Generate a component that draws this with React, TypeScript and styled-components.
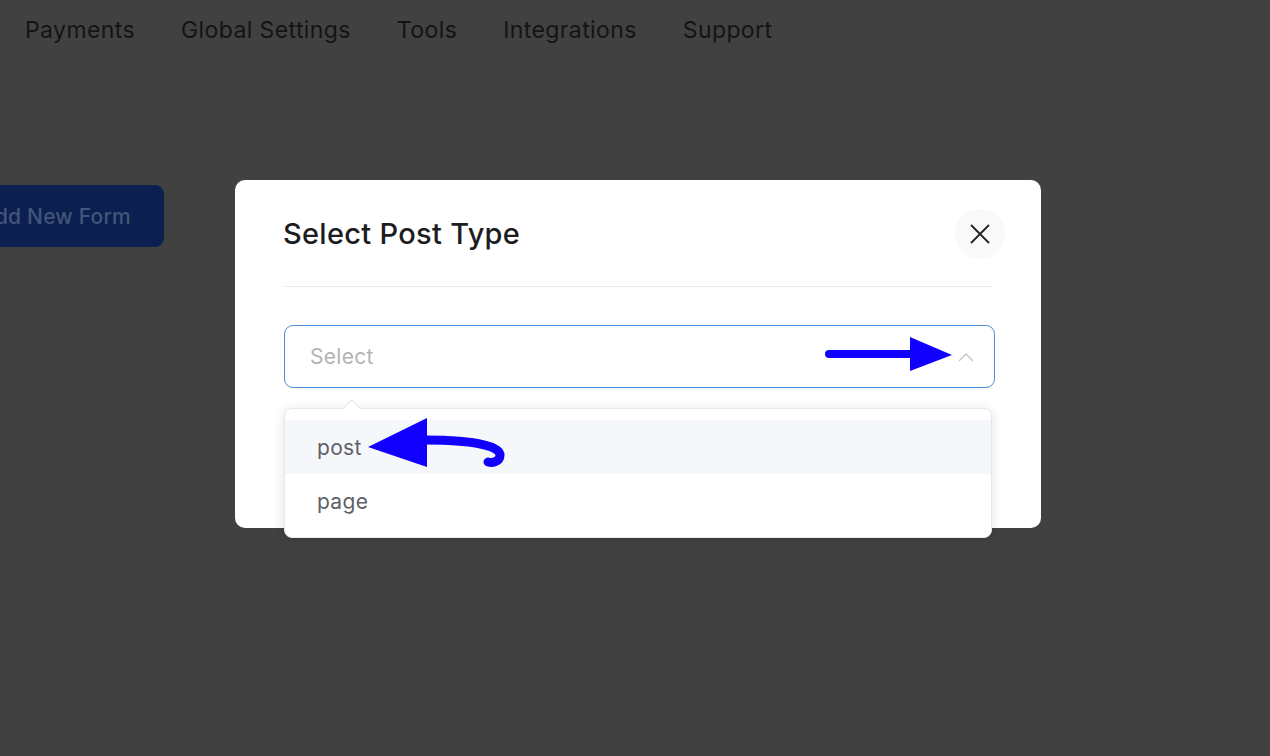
import React from "react";
import styled, { createGlobalStyle } from "styled-components";

const Global = createGlobalStyle`
  html, body { margin: 0; padding: 0; }
  body {
    background: #414141;
    font-family: Inter, "Noto Sans", "Liberation Sans", sans-serif;
    overflow: hidden;
  }
`;

const Page = styled.div`
  position: relative;
  width: 1270px;
  height: 756px;
  background: #414141;
  overflow: hidden;
`;

const Nav = styled.nav`
  display: flex;
  align-items: center;
  gap: 46px;
  height: 60px;
  padding-left: 25px;
`;

const NavItem = styled.span`
  font-size: 23px;
  font-weight: 400;
  color: #141414;
  letter-spacing: 0.4px;
`;

const Toolbar = styled.div`
  padding-top: 125px;
  display: flex;
`;

const AddButton = styled.div`
  margin-left: -42px;
  height: 62px;
  display: flex;
  align-items: center;
  padding: 0 33px 0 22px;
  background: #0b2050;
  border-radius: 9px;
  color: #44547a;
  font-size: 21px;
  font-weight: 500;
  letter-spacing: 0.2px;
  white-space: nowrap;
`;

const Modal = styled.div`
  position: absolute;
  left: 235px;
  top: 180px;
  width: 806px;
  height: 348px;
  background: #fff;
  border-radius: 10px;
  box-sizing: border-box;
  padding: 0 49px 0 48px;
`;

const Header = styled.div`
  display: flex;
  align-items: center;
  justify-content: space-between;
  height: 106px;
  border-bottom: 1px solid #ececec;
`;

const Title = styled.h2`
  margin: 0;
  font-size: 29px;
  font-weight: 500;
  color: #1d1d1f;
  letter-spacing: 0.3px;
`;

const CloseBtn = styled.div`
  width: 50px;
  height: 50px;
  border-radius: 50%;
  background: #f9f9f9;
  display: flex;
  align-items: center;
  justify-content: center;
  margin-right: -13px;
  margin-top: 1px;
`;

const Body = styled.div`
  padding-top: 38px;
`;

const SelectBox = styled.div`
  height: 63px;
  box-sizing: border-box;
  margin-right: -3px;
  margin-left: 1px;
  border: 1px solid #4a8fd8;
  border-radius: 9px;
  display: flex;
  align-items: center;
  justify-content: space-between;
  padding: 0 20px 0 25px;
`;

const Placeholder = styled.span`
  font-size: 21px;
  color: #b4b4b4;
  letter-spacing: 0.3px;
`;

const Dropdown = styled.div`
  position: absolute;
  left: 284px;
  top: 408px;
  width: 708px;
  height: 130px;
  box-sizing: border-box;
  background: #fff;
  border: 1px solid #e6e7ea;
  border-radius: 8px;
  box-shadow: 0 2px 12px rgba(0, 0, 0, 0.12);
  padding: 11px 0;
`;

const Caret = styled.div`
  position: absolute;
  top: -7px;
  left: 60px;
  width: 12px;
  height: 12px;
  background: #fff;
  border-left: 1px solid #e6e7ea;
  border-top: 1px solid #e6e7ea;
  transform: rotate(45deg);
`;

const Option = styled.div<{ $active?: boolean }>`
  height: 54px;
  display: flex;
  align-items: center;
  padding-left: 32px;
  font-size: 21px;
  letter-spacing: 0.3px;
  color: #5f6166;
  background: ${(p) => (p.$active ? "#f5f7fa" : "#fff")};
`;

const Annotation = styled.svg`
  position: absolute;
  left: 0;
  top: 0;
  pointer-events: none;
`;

export default function App() {
  return (
    <Page>
      <Global />
      <Nav>
        <NavItem>Payments</NavItem>
        <NavItem>Global Settings</NavItem>
        <NavItem>Tools</NavItem>
        <NavItem>Integrations</NavItem>
        <NavItem>Support</NavItem>
      </Nav>
      <Toolbar>
        <AddButton>Add New Form</AddButton>
      </Toolbar>
      <Modal>
        <Header>
          <Title>Select Post Type</Title>
          <CloseBtn>
            <svg width="20" height="20" viewBox="0 0 20 20">
              <path d="M1 1 L19 19 M19 1 L1 19" stroke="#222" strokeWidth="1.8" />
            </svg>
          </CloseBtn>
        </Header>
        <Body>
          <SelectBox>
            <Placeholder>Select</Placeholder>
            <svg width="16" height="10" viewBox="0 0 16 10">
              <path d="M1 9 L8 2 L15 9" stroke="#c0c4cc" strokeWidth="1.3" fill="none" />
            </svg>
          </SelectBox>
        </Body>
      </Modal>
      <Dropdown>
        <Caret />
        <Option $active>post</Option>
        <Option>page</Option>
      </Dropdown>
      <Annotation width="1270" height="756" viewBox="0 0 1270 756">
        <line x1="829" y1="354" x2="915" y2="354" stroke="#1200ff" strokeWidth="8" strokeLinecap="round" />
        <polygon points="910,337 952,355 910,371" fill="#1200ff" />
        <polygon points="368,447 427,418 427,467" fill="#1200ff" />
        <path d="M425 440 C 470 440, 500 445, 500 455 C 500 462, 492 463, 488 462" stroke="#1200ff" strokeWidth="9" fill="none" strokeLinecap="round" />
      </Annotation>
    </Page>
  );
}
